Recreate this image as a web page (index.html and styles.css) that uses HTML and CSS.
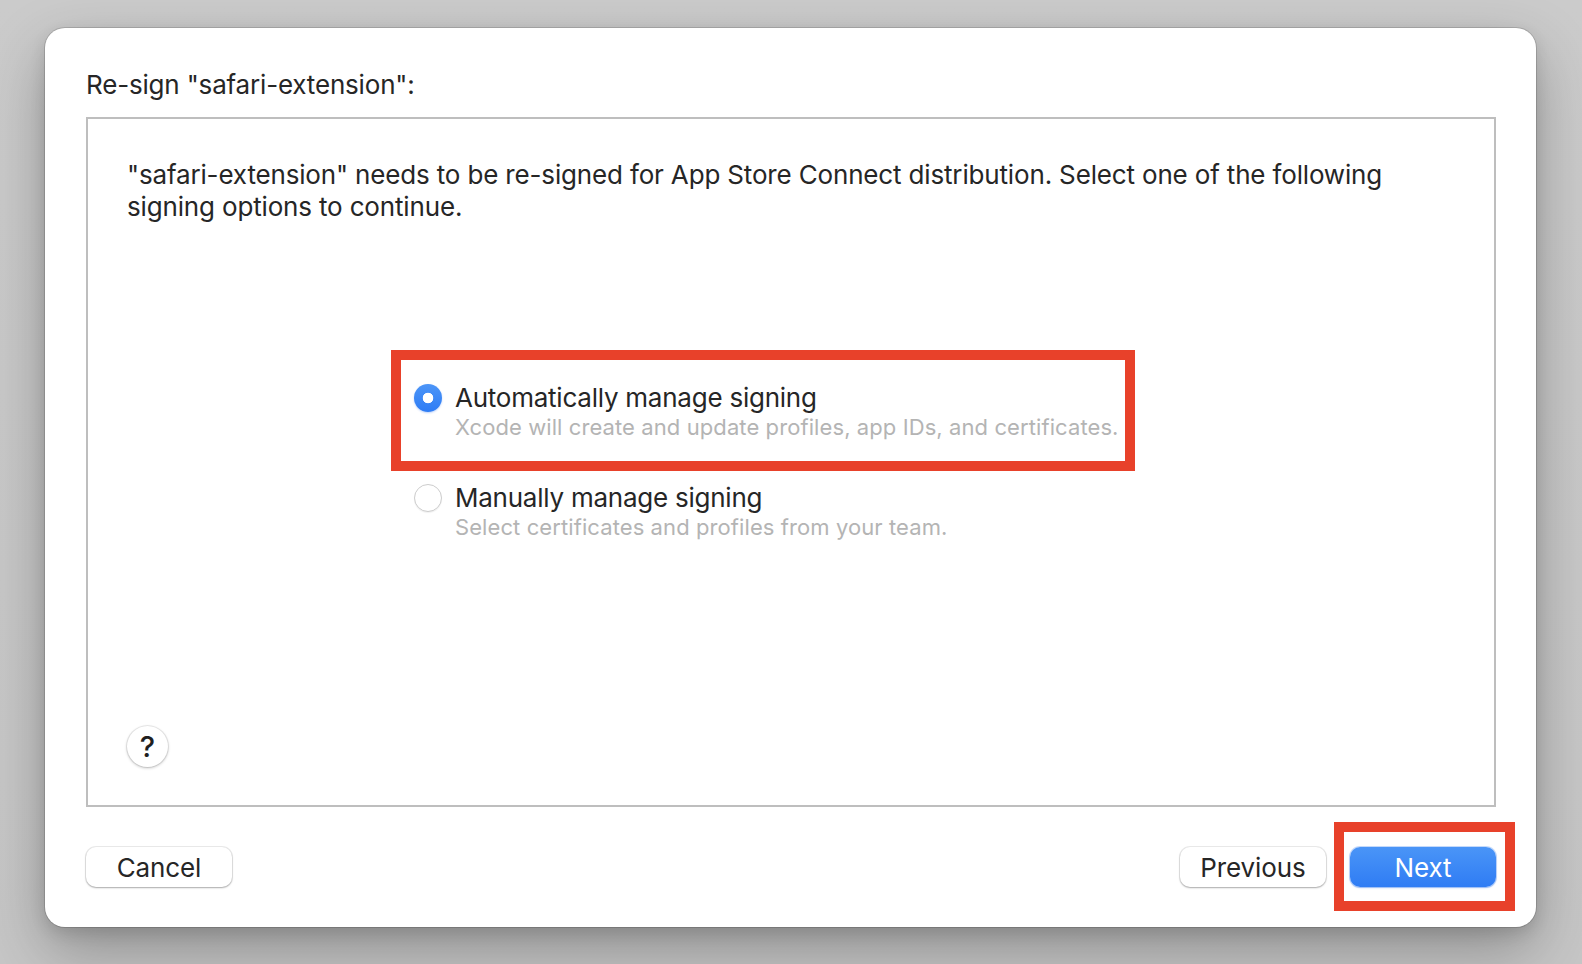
FILE: index.html
```html
<!DOCTYPE html>
<html lang="en">
<head>
<meta charset="utf-8">
<title>Re-sign</title>
<link rel="stylesheet" href="styles.css">
</head>
<body>
<div class="stage">
  <div class="window">
    <div class="title">Re-sign "safari-extension":</div>
    <div class="box">
      <p class="desc">"safari-extension" needs to be re-signed for App Store Connect distribution. Select one of the following signing options to continue.</p>
      <div class="options">
        <div class="option">
          <span class="radio checked"></span>
          <div class="option-text">
            <div class="option-title">Automatically manage signing</div>
            <div class="option-sub">Xcode will create and update profiles, app IDs, and certificates.</div>
          </div>
          <span class="mark mark-option"></span>
        </div>
        <div class="option">
          <span class="radio"></span>
          <div class="option-text">
            <div class="option-title">Manually manage signing</div>
            <div class="option-sub">Select certificates and profiles from your team.</div>
          </div>
        </div>
      </div>
      <div class="help">?</div>
    </div>
    <div class="footer">
      <button class="btn">Cancel</button>
      <div class="spacer"></div>
      <button class="btn">Previous</button>
      <div class="next-wrap">
        <button class="btn primary">Next</button>
        <span class="mark mark-next"></span>
      </div>
    </div>
  </div>
</div>
</body>
</html>
```
FILE: styles.css
```css
html, body {
  margin: 0;
  padding: 0;
}
body {
  width: 1582px;
  height: 964px;
  overflow: hidden;
  background: linear-gradient(180deg, #cbcbcb 0%, #c6c6c6 100%);
  font-family: "Inter", "Liberation Sans", sans-serif;
  color: #262626;
}
.stage {
  padding: 28px 0 0 45px;
}
.window {
  width: 1491px;
  height: 899px;
  box-sizing: border-box;
  background: #ffffff;
  border-radius: 20px;
  padding: 0 40px 0 41px;
  display: flex;
  flex-direction: column;
  box-shadow: 0 0 0 1px rgba(0, 0, 0, 0.14), 0 24px 60px rgba(0, 0, 0, 0.28), 0 6px 16px rgba(0, 0, 0, 0.12);
}
.title {
  margin-top: 41px;
  font-size: 26px;
  line-height: 32px;
  height: 32px;
  letter-spacing: -0.18px;
}
.box {
  margin-top: 16px;
  height: 690px;
  box-sizing: border-box;
  border: 2px solid #bebebe;
  padding: 40px 39px 38px 39px;
  display: flex;
  flex-direction: column;
}
.desc {
  margin: 0;
  font-size: 26px;
  line-height: 32px;
  letter-spacing: -0.16px;
}
.options {
  margin-top: 160px;
  margin-left: 287px;
  display: flex;
  flex-direction: column;
  gap: 42px;
}
.option {
  position: relative;
  display: flex;
  align-items: flex-start;
  gap: 13px;
}
.radio {
  flex: none;
  width: 28px;
  height: 28px;
  margin-top: 1px;
  box-sizing: border-box;
  border-radius: 50%;
  background: #ffffff;
  border: 1px solid #cdcdcd;
  box-shadow: 0 1px 1px rgba(0, 0, 0, 0.06);
}
.radio.checked {
  border: none;
  background: radial-gradient(circle, #ffffff 0 5px, transparent 5.6px), linear-gradient(180deg, #4c95f7 0%, #2e7cf5 100%);
  box-shadow: 0 1px 2px rgba(40, 110, 240, 0.3);
}
.option-title {
  font-size: 26px;
  line-height: 30px;
  letter-spacing: -0.24px;
}
.option-sub {
  font-size: 22px;
  line-height: 28px;
  color: #b4b4b4;
  letter-spacing: 0.09px;
}
.mark {
  position: absolute;
  box-sizing: border-box;
  border: 10px solid #e8412a;
  pointer-events: none;
}
.mark-option {
  left: -23px;
  top: -33px;
  width: 744px;
  height: 121px;
}
.help {
  margin-top: auto;
  width: 41px;
  height: 41px;
  border-radius: 50%;
  background: #ffffff;
  box-shadow: 0 0 0 1px rgba(0, 0, 0, 0.07), 0 1px 3px rgba(0, 0, 0, 0.25);
  display: flex;
  align-items: center;
  justify-content: center;
  font-size: 29px;
  font-weight: 500;
  line-height: 1;
  color: #1f1f1f;
}
.footer {
  margin-top: 40px;
  display: flex;
  align-items: center;
}
.spacer {
  flex: 1;
}
.btn {
  width: 146px;
  height: 40px;
  margin: 0;
  padding: 0;
  border: none;
  border-radius: 10px;
  background: #ffffff;
  font-family: inherit;
  font-size: 26px;
  letter-spacing: -0.1px;
  color: #262626;
  box-shadow: 0 0 0 1px rgba(0, 0, 0, 0.08), 0 1px 2px rgba(0, 0, 0, 0.28);
}
.next-wrap {
  position: relative;
  margin-left: 24px;
  display: flex;
}
.btn.primary {
  color: #ffffff;
  background: linear-gradient(180deg, #4a95f7 0%, #2f7cf4 100%);
  box-shadow: 0 0 0 1px rgba(30, 110, 240, 0.25), 0 1px 2px rgba(30, 100, 230, 0.3);
}
.mark-next {
  left: -16px;
  top: -25px;
  width: 181px;
  height: 89px;
}
```
